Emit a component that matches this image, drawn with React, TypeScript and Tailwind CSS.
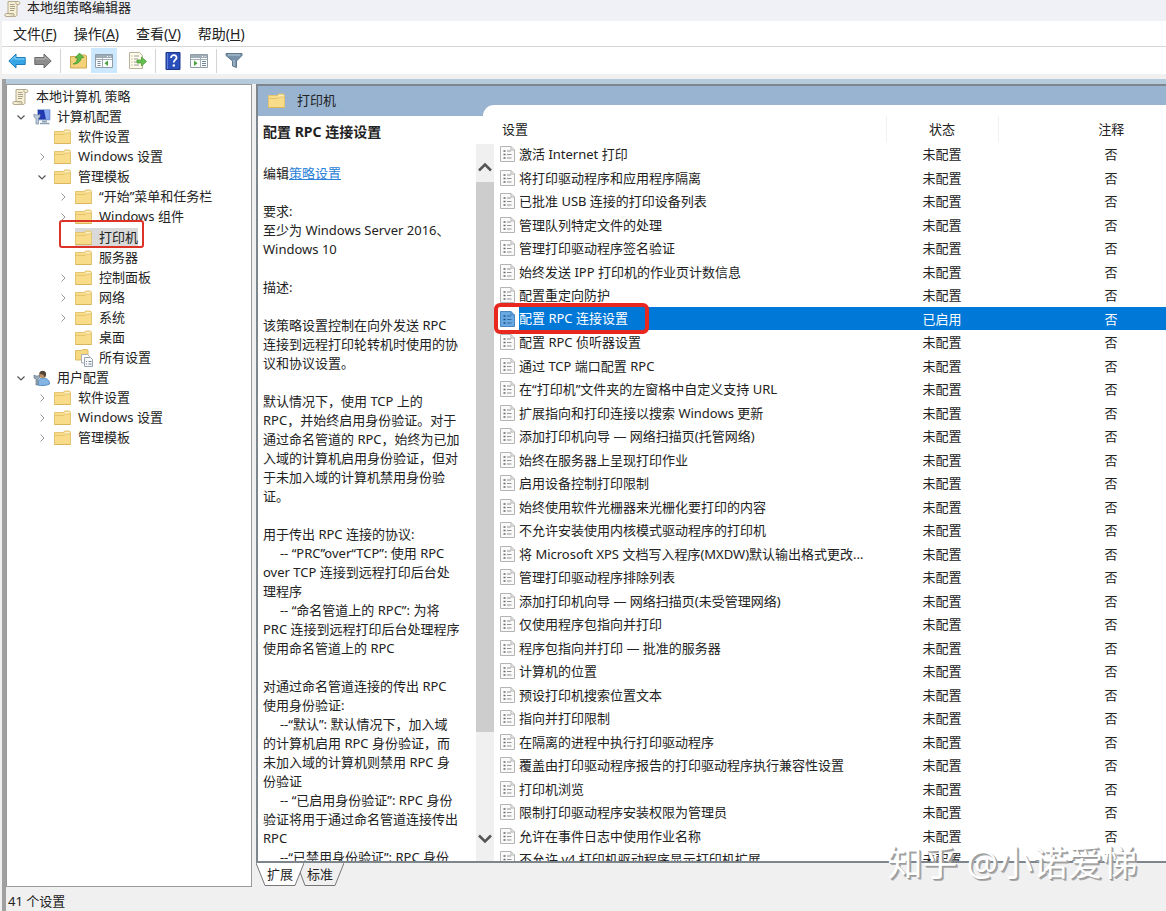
import type { ReactNode } from "react";

type Kind = "folder" | "scroll" | "computer" | "user" | "all";

interface TreeNode {
  label: string;
  depth: number;
  icon: Kind;
  arrow?: "open" | "closed";
  selected?: boolean;
  gap?: boolean;
}

const TREE: TreeNode[] = [
  { label: "本地计算机 策略", depth: 0, icon: "scroll" },
  { label: "计算机配置", depth: 1, icon: "computer", arrow: "open" },
  { label: "软件设置", depth: 2, icon: "folder" },
  { label: "Windows 设置", depth: 2, icon: "folder", arrow: "closed" },
  { label: "管理模板", depth: 2, icon: "folder", arrow: "open" },
  { label: "“开始”菜单和任务栏", depth: 3, icon: "folder", arrow: "closed" },
  { label: "Windows 组件", depth: 3, icon: "folder", arrow: "closed" },
  { label: "打印机", depth: 3, icon: "folder", selected: true, gap: true },
  { label: "服务器", depth: 3, icon: "folder" },
  { label: "控制面板", depth: 3, icon: "folder", arrow: "closed" },
  { label: "网络", depth: 3, icon: "folder", arrow: "closed" },
  { label: "系统", depth: 3, icon: "folder", arrow: "closed" },
  { label: "桌面", depth: 3, icon: "folder" },
  { label: "所有设置", depth: 3, icon: "all" },
  { label: "用户配置", depth: 1, icon: "user", arrow: "open" },
  { label: "软件设置", depth: 2, icon: "folder", arrow: "closed" },
  { label: "Windows 设置", depth: 2, icon: "folder", arrow: "closed" },
  { label: "管理模板", depth: 2, icon: "folder", arrow: "closed" },
];

const INDENT = ["pl-[5px]", "pl-1.5", "pl-[27px]", "pl-12"];

const SETTINGS = [
  "激活 Internet 打印",
  "将打印驱动程序和应用程序隔离",
  "已批准 USB 连接的打印设备列表",
  "管理队列特定文件的处理",
  "管理打印驱动程序签名验证",
  "始终发送 IPP 打印机的作业页计数信息",
  "配置重定向防护",
  "配置 RPC 连接设置",
  "配置 RPC 侦听器设置",
  "通过 TCP 端口配置 RPC",
  "在“打印机”文件夹的左窗格中自定义支持 URL",
  "扩展指向和打印连接以搜索 Windows 更新",
  "添加打印机向导 — 网络扫描页(托管网络)",
  "始终在服务器上呈现打印作业",
  "启用设备控制打印限制",
  "始终使用软件光栅器来光栅化要打印的内容",
  "不允许安装使用内核模式驱动程序的打印机",
  "将 Microsoft XPS 文档写入程序(MXDW)默认输出格式更改...",
  "管理打印驱动程序排除列表",
  "添加打印机向导 — 网络扫描页(未受管理网络)",
  "仅使用程序包指向并打印",
  "程序包指向并打印 — 批准的服务器",
  "计算机的位置",
  "预设打印机搜索位置文本",
  "指向并打印限制",
  "在隔离的进程中执行打印驱动程序",
  "覆盖由打印驱动程序报告的打印驱动程序执行兼容性设置",
  "打印机浏览",
  "限制打印驱动程序安装权限为管理员",
  "允许在事件日志中使用作业名称",
  "不允许 v4 打印机驱动程序显示打印机扩展",
];

const ACTIVE = 7;

const DESCRIPTION = `要求:
至少为 Windows Server 2016、
Windows 10

描述:

该策略设置控制在向外发送 RPC
连接到远程打印轮转机时使用的协
议和协议设置。

默认情况下，使用 TCP 上的
RPC，并始终启用身份验证。对于
通过命名管道的 RPC，始终为已加
入域的计算机启用身份验证，但对
于未加入域的计算机禁用身份验
证。

用于传出 RPC 连接的协议:
     -- “PRC”over“TCP”: 使用 RPC
over TCP 连接到远程打印后台处
理程序
     -- “命名管道上的 RPC”: 为将
PRC 连接到远程打印后台处理程序
使用命名管道上的 RPC

对通过命名管道连接的传出 RPC
使用身份验证:
     --“默认”: 默认情况下，加入域
的计算机启用 RPC 身份验证，而
未加入域的计算机则禁用 RPC 身
份验证
     -- “已启用身份验证”: RPC 身份
验证将用于通过命名管道连接传出
RPC
     --“已禁用身份验证”: RPC 身份`;

function FolderIcon() {
  return (
    <svg viewBox="0 0 17 16" className="h-4 w-[17px] shrink-0">
      <path d="M.5 2.500h9l1-1.500h5l1 1.500v12H.5z" fill="#f8dc8a" stroke="#e3c473" />
      <path d="M11 3h4.500" stroke="#fff8dc" strokeWidth="1.500" />
      <path d="M1 5.500h9l1.500-1.500h5" stroke="#e6c46c" fill="none" />
      <path d="M.5 14.500h16" stroke="#d9b55c" />
    </svg>
  );
}

function ScrollIcon() {
  return (
    <svg viewBox="0 0 17 18" className="h-[18px] w-[17px] shrink-0">
      <path d="M4 1.500h10.500c1.500 0 2 2.500.5 3h-2V14c0 2-1 2.500-2 2.500H2c-1.500 0-1.500-3 0-3h2z" fill="#f5efd8" stroke="#b5ab8c" />
      <path d="M2 13.500h7.500c.8.500.8 2.500 0 3" fill="#dfd5b2" stroke="#b5ab8c" />
      <path d="M12.500 1.500c-1 .8-1 2.200.3 3" fill="none" stroke="#b5ab8c" />
      <path d="M6 4.500h4.500M6 6.500h5M6 8.500h5M6 10.500h4" stroke="#aba287" />
    </svg>
  );
}

function ComputerIcon() {
  return (
    <svg viewBox="0 0 18 16" className="h-4 w-[18px] shrink-0">
      <path d="M4.500.500h12.500v10.500H4.500z" fill="#2238b0" stroke="#a5bdd8" />
      <path d="M11 1h5.500v9.500H13z" fill="#86a8ee" />
      <path d="M9 11.500h5v2H9z" fill="#92a5b9" />
      <path d="M7 14.500h9.500" stroke="#8ca0b4" strokeWidth="1.500" />
      <path d="M1 5v3l2 1v6h2.500V9l1.500-1V5L5.500 6H3z" fill="#c2cedb" stroke="#7388a0" strokeWidth=".7" />
    </svg>
  );
}

function UserIcon() {
  return (
    <svg viewBox="0 0 18 16" className="h-4 w-[18px] shrink-0">
      <path d="M5 15c-.5-5 2-7 5-7s7 2 6.500 6c-2 1.500-9 2-11.500 1z" fill="#82b5e4" stroke="#5b8fc2" />
      <circle cx="9.500" cy="4.500" r="3.500" fill="#b98b62" />
      <path d="M6.500 4c0-4 6-4.500 6.500-.5.200 2-.5 3-1.500 4C11.500 5 10 4 6.500 4z" fill="#51453a" />
      <path d="M1 5v3l2 1v6h2V9l1.500-1V5L5 6H3z" fill="#9ba9b8" stroke="#68798b" strokeWidth=".7" />
    </svg>
  );
}

function AllIcon() {
  return (
    <svg viewBox="0 0 19 18" className="h-[18px] w-[19px] shrink-0">
      <path d="M.5 1.500h6l1-1h5l.5 1V11H.5z" fill="#f6d87e" stroke="#ddbd68" />
      <path d="M6.500 5.500h6l2 2V14h-8z" fill="#fff" stroke="#a8afb7" />
      <path d="M9.500 8.500h6l2 2v7h-8z" fill="#f7f9fb" stroke="#98a3b0" />
      <path d="M11 12.500h1M13.500 12.500h3M11 15h1M13.500 15h3" stroke="#6f8093" />
    </svg>
  );
}

function PolicyIcon({ active }: { active?: boolean }) {
  const edge = active ? "#4b87c5" : "#b4b4b4";
  const line = active ? "#1d4d86" : "#666";
  return (
    <svg viewBox="0 0 15 16" className="h-4 w-[15px] shrink-0">
      <path d="M.5.500h10.500l3.500 3.500v11.500H.5z" fill={active ? "#69a9e2" : "#fafafa"} stroke={edge} />
      <path d="M11 .500v3.500h3.500" fill="none" stroke={edge} />
      <path d="M3.500 5h2M3.500 8.500h2M3.500 12h2" stroke={line} strokeWidth="1.600" />
      <path d="M7 5h4M7 8.500h4.500M7 12h4.500" stroke={line} strokeWidth=".7" />
    </svg>
  );
}

function Arrow({ dir }: { dir?: "open" | "closed" }) {
  if (!dir) return <span className="w-4 shrink-0" />;
  return (
    <button type="button" aria-label={dir === "open" ? "折叠" : "展开"} className="flex w-4 shrink-0 justify-center">
      <svg viewBox="0 0 10 10" className="size-2.5" fill="none">
        {dir === "open" ? <path d="M1.500 3.500 5 7l3.500-3.500" stroke="#555" strokeWidth="1.200" /> : <path d="M3.500 1.500 7 5 3.500 8.500" stroke="#999" />}
      </svg>
    </button>
  );
}

const ICONS: Record<Kind, () => ReactNode> = {
  folder: FolderIcon,
  scroll: ScrollIcon,
  computer: ComputerIcon,
  user: UserIcon,
  all: AllIcon,
};

function TreeRow({ node }: { node: TreeNode }) {
  const Icon = ICONS[node.icon];
  return (
    <li className={`flex h-5 items-center whitespace-nowrap ${INDENT[node.depth]} ${node.gap ? "mt-px" : ""}`}>
      {node.depth > 0 && <Arrow dir={node.arrow} />}
      <span className={`relative flex h-5 items-center ${node.depth > 0 ? "ml-1" : ""} ${node.selected ? "bg-[#d9d9d9]" : ""}`}>
        <span className="flex w-6 shrink-0">
          <Icon />
        </span>
        {node.label}
        {node.selected && <span className="absolute -top-2 -right-1.5 -left-4 h-7 rounded-[3px] border-2 border-[#dc3228]" />}
      </span>
    </li>
  );
}

function ToolButton({ label, active, children }: { label: string; active?: boolean; children: ReactNode }) {
  return (
    <button
      type="button"
      aria-label={label}
      className={`flex h-[25px] w-[26px] items-center justify-center ${active ? "bg-[#cce8ff]" : ""}`}
    >
      {children}
    </button>
  );
}

function ArrowShape({ left }: { left?: boolean }) {
  return (
    <svg viewBox="0 0 18 16" className="h-4 w-[18px]">
      <path
        d={left ? "M.8 8 8 1v3.500h9.200v7H8V15z" : "M17.200 8 10 1v3.500H.8v7H10V15z"}
        fill={left ? "#35a5e5" : "#8c8c8c"}
        stroke={left ? "#1c7ebd" : "#6c6c6c"}
      />
      <path d={left ? "M3 7.500 7 3.500v2.500H16.500" : "M1.500 6h9.500V3.500l4 4"} fill="none" stroke={left ? "#8ad4fa" : "#b5b5b5"} />
    </svg>
  );
}

function PaneIcon({ left }: { left?: boolean }) {
  return (
    <svg viewBox="0 0 18 16" className="h-4 w-[18px]">
      <path d="M.5 1.500h17v13H.5z" fill="#fbfcfc" stroke="#8f9da8" />
      <path d="M1 2h16v3H1z" fill="#9dacb7" />
      <path d="M12 3.500h1M14.500 3.500h1" stroke="#fff" />
      {left ? (
        <>
          <path d="M7.500 5v9.500M1 6.500h16" stroke="#a3afb8" />
          <path d="M2.500 8.500h3M2.500 10.500h3M2.500 12.500h3" stroke="#76879a" />
          <path d="M13 7.500v5.500l-3.500-2.700z" fill="#48a13c" />
        </>
      ) : (
        <>
          <path d="M10.500 5v9.500M1 6.500h16" stroke="#a3afb8" />
          <path d="M12 8.500h4M12 10.500h4M12 12.500h4" stroke="#76879a" />
          <path d="M4 7.500v5.500l3.500-2.700z" fill="#48a13c" />
        </>
      )}
    </svg>
  );
}

function Divider() {
  return <span className="mx-1 h-6 w-px bg-[#d5d5d5]" />;
}

function Toolbar() {
  return (
    <div role="toolbar" className="flex h-[27px] items-center pl-0.5">
      <ToolButton label="后退">
        <ArrowShape left />
      </ToolButton>
      <ToolButton label="前进">
        <ArrowShape />
      </ToolButton>
      <Divider />
      <ToolButton label="上一级">
        <svg viewBox="0 0 17 17" className="size-[17px]">
          <path d="M.5 4.500h6l1.500-1.500h7.500l1 1v12H.5z" fill="#f3d27a" stroke="#cda852" />
          <path d="M3 12c3-1 4-3 4.500-6H5L9.500 1 14 5.500h-2.500C11 9 8 12.500 3 12z" fill="#5eb947" stroke="#32882b" strokeWidth=".6" />
        </svg>
      </ToolButton>
      <ToolButton label="显示/隐藏控制台树" active>
        <PaneIcon left />
      </ToolButton>
      <span className="w-2" />
      <ToolButton label="导出列表">
        <svg viewBox="0 0 18 17" className="h-[17px] w-[18px]">
          <path d="M.5.500h10l3 3v13H.5z" fill="#fffbe9" stroke="#b8b39d" />
          <path d="M2.500 4h1M5 4h5M2.500 7h1M5 7h4M2.500 10h1M5 10h3M2.500 13h1M5 13h5" stroke="#9a9da1" />
          <path d="M8 8h4.500V5l5 4.500-5 4.500v-3H8z" fill="#67bf4e" stroke="#3d9732" strokeWidth=".7" />
        </svg>
      </ToolButton>
      <Divider />
      <ToolButton label="帮助">
        <svg viewBox="0 0 16 18" className="h-[18px] w-4">
          <path d="M1 .500h14v17H1z" fill="#2c50bb" stroke="#1b3789" />
          <path d="M2.500 1v16" stroke="#5f80da" />
          <path d="M6 6c0-4 6-3.500 5.500 0-.3 2-2.700 2-2.700 4.500" fill="none" stroke="#fff" strokeWidth="1.800" />
          <circle cx="8.800" cy="13.500" r="1.200" fill="#fff" />
        </svg>
      </ToolButton>
      <ToolButton label="显示/隐藏操作窗格">
        <PaneIcon />
      </ToolButton>
      <Divider />
      <ToolButton label="筛选器">
        <svg viewBox="0 0 18 17" className="h-[17px] w-[18px]">
          <path d="M1 1.500h16v2L11.500 9v6.500l-4-1.500V9L1 3.500z" fill="#7893a9" stroke="#60798d" />
          <path d="M3 3h12M9 8v6" stroke="#b8cbd9" />
        </svg>
      </ToolButton>
    </div>
  );
}

const MENUS = [
  ["文件", "F"],
  ["操作", "A"],
  ["查看", "V"],
  ["帮助", "H"],
];

function DetailPane() {
  return (
    <section className="flex min-h-0 w-[236px] shrink-0 flex-col">
      <h2 className="mt-[5px] h-[23px] pl-[5px] text-sm leading-[21px] font-bold">配置 RPC 连接设置</h2>
      <div className="flex min-h-0 flex-1">
        <div className="min-w-0 flex-1 overflow-hidden pt-5 pl-[5px] leading-[19px] whitespace-pre">
          <p>
            编辑
            <a href="#edit" className="text-[#2a82d8] underline">
              策略设置
            </a>
          </p>
          <p className="mt-[19px]">{DESCRIPTION}</p>
        </div>
        <div className="flex w-[18px] shrink-0 flex-col bg-[#f0f0f0]">
          <button type="button" aria-label="向上滚动" className="flex h-[38px] items-center justify-center pt-2">
            <svg viewBox="0 0 14 10" className="h-2.5 w-3.5" fill="none" stroke="#555" strokeWidth="2.500">
              <path d="m1 8.500 6-6 6 6" />
            </svg>
          </button>
          <div className="h-[550px] bg-[#cdcdcd]" />
          <button type="button" aria-label="向下滚动" className="mt-auto mb-3 flex h-5 items-center justify-center">
            <svg viewBox="0 0 14 10" className="h-2.5 w-3.5" fill="none" stroke="#555" strokeWidth="2.500">
              <path d="m1 1.500 6 6 6-6" />
            </svg>
          </button>
        </div>
      </div>
    </section>
  );
}

function SettingsTable() {
  return (
    <div className="min-h-0 min-w-0 flex-1 overflow-hidden">
      <table className="w-full table-fixed border-collapse leading-5">
        <colgroup>
          <col />
          <col className="w-[112px]" />
          <col className="w-[168px]" />
        </colgroup>
        <thead>
          <tr className="h-[26px]">
            <th className="border-r border-[#f0f0f0] p-0 pl-2 text-left font-normal">设置</th>
            <th className="border-r border-[#f0f0f0] p-0 font-normal">状态</th>
            <th className="p-0 pl-[58px] font-normal">注释</th>
          </tr>
        </thead>
        <tbody>
          {SETTINGS.map((name, i) => {
            const active = i === ACTIVE;
            return (
              <tr key={name} className={`h-6 even:h-[23px] ${active ? "text-white" : ""}`}>
                <td className="p-0">
                  <span className="relative flex items-center gap-1 pl-1.5 whitespace-nowrap">
                    <PolicyIcon active={active} />
                    <span className={`flex-1 ${active ? "bg-[#0078d7] leading-[23px]" : ""}`}>{name}</span>
                    {active && <span className="absolute -top-1 left-0 h-[31px] w-[155px] rounded-md border-4 border-[#e8281e]" />}
                  </span>
                </td>
                <td className={`p-0 text-center ${active ? "bg-[#0078d7]" : ""}`}>{active ? "已启用" : "未配置"}</td>
                <td className={`p-0 pl-[58px] text-center ${active ? "bg-[#0078d7]" : ""}`}>否</td>
              </tr>
            );
          })}
        </tbody>
      </table>
    </div>
  );
}

function ViewTabs() {
  return (
    <div role="tablist" className="flex h-6">
      <button type="button" role="tab" aria-selected="true" className="relative z-10 h-6 w-12">
        <svg viewBox="0 0 48 24" className="absolute inset-0 size-full">
          <path d="M0 0h48l-9 22.500H9z" fill="#fff" />
          <path d="m0 0 9 22.500h30L48 0" fill="none" stroke="#777" />
        </svg>
        <span className="relative">扩展</span>
      </button>
      <button type="button" role="tab" aria-selected="false" className="relative -ml-2 h-6 w-12">
        <svg viewBox="0 0 48 24" className="absolute inset-0 size-full">
          <path d="m4 9 5 13.500h30L48 0" fill="none" stroke="#777" />
        </svg>
        <span className="relative">标准</span>
      </button>
    </div>
  );
}

export default function App() {
  return (
    <div className="relative flex h-screen flex-col overflow-hidden bg-[#f0f0f0] font-['Noto_Sans','Noto_Sans_CJK_SC',sans-serif] text-[13px] text-[#222]">
      <header className="flex h-[21px] shrink-0 items-start gap-1.5 bg-[#f0f1f7] pl-1">
        <ScrollIcon />
        <h1 className="leading-3.5">本地组策略编辑器</h1>
      </header>
      <div className="ml-0.5 shrink-0 bg-white">
        <nav className="flex h-[26px] items-center gap-[17px] border-b border-[#d6d6d6] pl-[11px] text-sm">
          {MENUS.map(([name, key]) => (
            <button key={key} type="button" className="leading-5">
              {name}(<u>{key}</u>)
            </button>
          ))}
        </nav>
        <Toolbar />
      </div>
      <div className="h-[5px] shrink-0" />
      <main className="ml-0.5 flex min-h-0 flex-1 flex-col border-l-4 border-[#a0a0a0]">
        <div className="h-[5px] shrink-0 bg-[#b5cbdc]" />
        <div className="flex min-h-0 flex-1 gap-1">
          <aside className="w-[246px] shrink-0 overflow-hidden border border-[#999] bg-white pt-0.5">
            <ul>
              {TREE.map((node, i) => (
                <TreeRow key={i} node={node} />
              ))}
            </ul>
          </aside>
          <div className="flex min-w-0 flex-1 flex-col">
            <div className="flex min-h-0 flex-1 flex-col border-t-2 border-b-2 border-l-2 border-[#7d858d] bg-white">
              <div className="flex h-[30px] shrink-0 bg-[#99b4d1]">
                <h2 className="flex w-[225px] shrink-0 items-center gap-3 pl-2.5">
                  <FolderIcon />
                  打印机
                </h2>
                <div className="mt-[19px] flex-1 rounded-tl-[14px] bg-white" />
              </div>
              <div className="flex min-h-0 flex-1">
                <DetailPane />
                <SettingsTable />
              </div>
            </div>
            <ViewTabs />
          </div>
        </div>
        <footer className="h-6 shrink-0 pl-0.5 leading-7">41 个设置</footer>
      </main>
      <div className="pointer-events-none absolute right-7 bottom-7 text-[35px] leading-10 text-white [text-shadow:1px_1px_0_#999,2px_2px_0_#aaa]">
        知乎 @小诺爱悌
      </div>
    </div>
  );
}
